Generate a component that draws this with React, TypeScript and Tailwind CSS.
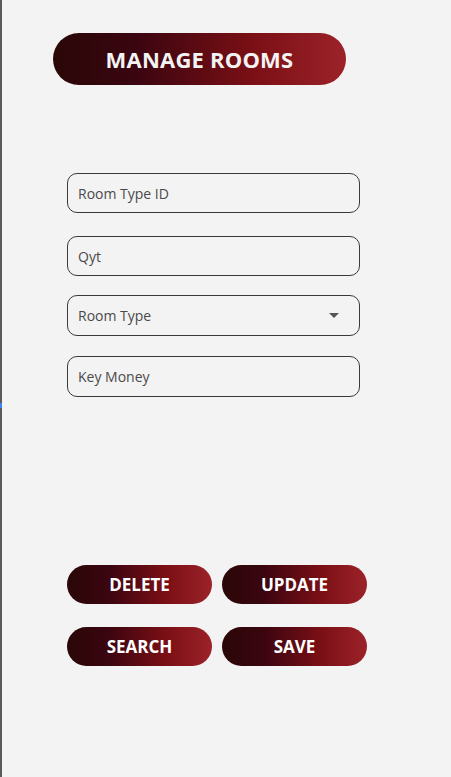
import { useState } from "react"

const GRAD = "bg-[linear-gradient(90deg,#2a0707_0%,#3a0510_28%,#7a0f15_68%,#9c2229_100%)]"

function Field({ placeholder, className = "" }: { placeholder: string; className?: string }) {
  return (
    <input
      placeholder={placeholder}
      className={`block w-[293px] rounded-[10px] border border-[#3a3a3a] bg-transparent px-[10px] text-[14px] text-[#333] placeholder:text-[#4a4a4a] outline-none ${className}`}
    />
  )
}

function ActionButton({ label }: { label: string }) {
  return (
    <button className={`h-[39px] w-[145px] rounded-full ${GRAD} text-[17px] font-bold text-white`}>
      {label}
    </button>
  )
}

export default function App() {
  const [roomType] = useState("")

  return (
    <div
      className="relative min-h-[777px] w-full border-l-2 border-[#5a5a5a] bg-[#f3f3f3]"
      style={{ fontFamily: "'Open Sans', 'Noto Sans', sans-serif" }}
    >
      <div className="pt-[33px] pl-[51px]">
        <div
          className={`flex h-[52px] w-[293px] items-center justify-center rounded-full ${GRAD} text-[22px] font-bold tracking-[0.2px] text-[#f3f3f3]`}
        >
          MANAGE ROOMS
        </div>
      </div>

      <div className="pl-[65px] pt-[88px]">
        <Field placeholder="Room Type ID" className="h-[40px]" />
        <Field placeholder="Qyt" className="mt-[23px] h-[40px]" />
        <div className="relative mt-[19px] flex h-[41px] w-[293px] items-center rounded-[10px] border border-[#3a3a3a] px-[10px] text-[14px] text-[#4a4a4a]">
          <span>{roomType || "Room Type"}</span>
          <span className="ml-auto mr-[10px] h-0 w-0 border-x-[5px] border-t-[5px] border-x-transparent border-t-[#555]" />
        </div>
        <Field placeholder="Key Money" className="mt-[20px] h-[41px]" />

        <div className="mt-[168px] grid w-[300px] grid-cols-[145px_145px] gap-x-[10px] gap-y-[23px]">
          <ActionButton label="DELETE" />
          <ActionButton label="UPDATE" />
          <ActionButton label="SEARCH" />
          <ActionButton label="SAVE" />
        </div>
      </div>

      {/* little blue tick on the left edge */}
      <div className="absolute left-[-2px] top-[403px] h-[5px] w-[2px] bg-[#3b82f6]" />
    </div>
  )
}
